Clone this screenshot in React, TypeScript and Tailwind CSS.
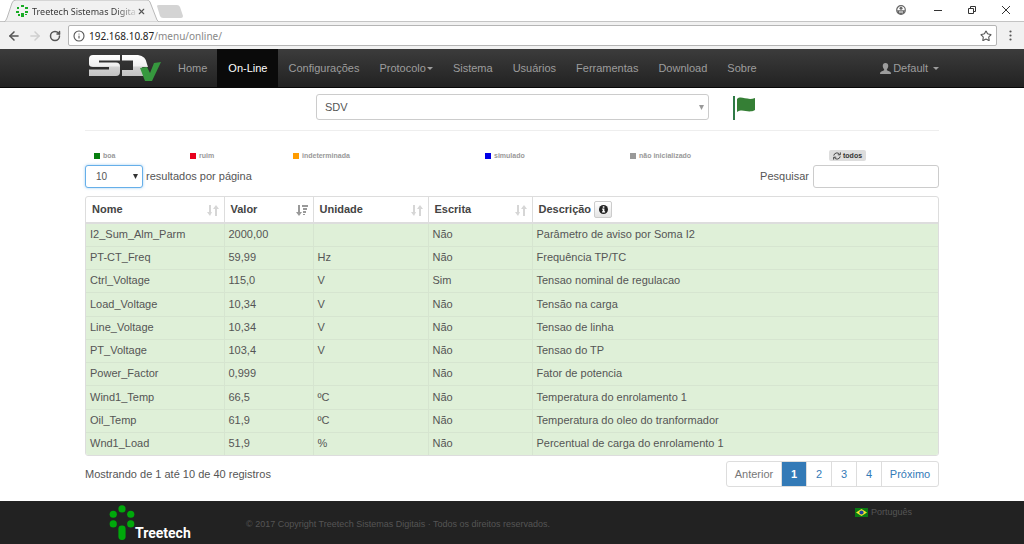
import React, { useState } from 'react';
import { ArrowLeft, ArrowRight, RotateCw, Info, Star, X } from 'lucide-react';

interface Reading {
  name: string;
  value: string;
  unit: string;
  writable: string;
  description: string;
}

const readings: Reading[] = [
  { name: 'I2_Sum_Alm_Parm', value: '2000,00', unit: '', writable: 'Não', description: 'Parâmetro de aviso por Soma I2' },
  { name: 'PT-CT_Freq', value: '59,99', unit: 'Hz', writable: 'Não', description: 'Frequência TP/TC' },
  { name: 'Ctrl_Voltage', value: '115,0', unit: 'V', writable: 'Sim', description: 'Tensao nominal de regulacao' },
  { name: 'Load_Voltage', value: '10,34', unit: 'V', writable: 'Não', description: 'Tensão na carga' },
  { name: 'Line_Voltage', value: '10,34', unit: 'V', writable: 'Não', description: 'Tensao de linha' },
  { name: 'PT_Voltage', value: '103,4', unit: 'V', writable: 'Não', description: 'Tensao do TP' },
  { name: 'Power_Factor', value: '0,999', unit: '', writable: 'Não', description: 'Fator de potencia' },
  { name: 'Wind1_Temp', value: '66,5', unit: 'ºC', writable: 'Não', description: 'Temperatura do enrolamento 1' },
  { name: 'Oil_Temp', value: '61,9', unit: 'ºC', writable: 'Não', description: 'Temperatura do oleo do tranformador' },
  { name: 'Wnd1_Load', value: '51,9', unit: '%', writable: 'Não', description: 'Percentual de carga do enrolamento 1' },
];

const columns = [
  { label: 'Nome', width: 'w-[138px]', sort: 'both' },
  { label: 'Valor', width: 'w-[89px]', sort: 'desc' },
  { label: 'Unidade', width: 'w-[115px]', sort: 'both' },
  { label: 'Escrita', width: 'w-[104px]', sort: 'both' },
];

const navItems = [
  { label: 'Home' },
  { label: 'On-Line', active: true },
  { label: 'Configurações' },
  { label: 'Protocolo', caret: true },
  { label: 'Sistema' },
  { label: 'Usuários' },
  { label: 'Ferramentas' },
  { label: 'Download' },
  { label: 'Sobre' },
];

const legend = [
  { label: 'boa', color: 'bg-[#087f10]', width: 'w-[96px]' },
  { label: 'ruim', color: 'bg-[#e8001c]', width: 'w-[103px]' },
  { label: 'indeterminada', color: 'bg-[#ff9c00]', width: 'w-[192px]' },
  { label: 'simulado', color: 'bg-[#0000e6]', width: 'w-[145px]' },
  { label: 'não inicializado', color: 'bg-[#999999]', width: 'w-[199px]' },
];

const Caret: React.FC<{ className?: string }> = ({ className = '' }) => (
  <svg viewBox="0 0 6 3" className={`h-[3px] w-[6px] ${className}`} fill="currentColor">
    <path d="M0 0h6L3 3z" />
  </svg>
);

const SelectArrow: React.FC<{ className?: string }> = ({ className = '' }) => (
  <svg viewBox="0 0 5 5" className={`pointer-events-none absolute h-[5px] w-[5px] ${className}`} fill="currentColor">
    <path d="M0 0h5L2.5 5z" />
  </svg>
);

const TreeLogo: React.FC<{ className?: string }> = ({ className = '' }) => (
  <svg viewBox="0 0 26 36" className={className} fill="#00a80b">
    <circle cx="13" cy="4" r="3.7" />
    <circle cx="4" cy="9.5" r="3.7" />
    <circle cx="22" cy="9.5" r="3.7" />
    <circle cx="4" cy="19.5" r="3.7" />
    <circle cx="22" cy="19.5" r="3.7" />
    <rect x="9.3" y="21" width="7.4" height="15" rx="3.5" />
  </svg>
);

const SdvLogo: React.FC = () => (
  <svg viewBox="0 0 73 30" className="h-[30px] w-[73px]">
    <defs>
      <linearGradient id="sdv" x1="0" y1="0" x2="0" y2="1">
        <stop offset="0" stopColor="#ffffff" />
        <stop offset="0.5" stopColor="#f0f0f0" />
        <stop offset="0.6" stopColor="#d0d0d0" />
        <stop offset="1" stopColor="#c2c2c2" />
      </linearGradient>
    </defs>
    <path
      fill="url(#sdv)"
      d="M5 2H32V7.500H11V9.500H28Q32 9.500 32 13V19Q32 23 28 23H1V16.500H21V14H5Q1 14 1 11V6Q1 2 5 2ZM34 2H50Q58 3 59 11L60 14H54L58 23H34V17H45V7.500H34Z"
    />
    <path fill="#36983e" d="M52 15L59 14L62 20L66 10L73 9L64 28H57Z" />
  </svg>
);

const SortIcon: React.FC<{ type: string }> = ({ type }) =>
  type === 'desc' ? (
    <svg viewBox="0 0 12 12" className="h-3 w-3 shrink-0 text-[#999]" fill="currentColor">
      <path d="M2 1h2v7h2l-3 4-3-4h2zM6 1h6v2H6zM7 4h4v2H7zM7 7h3v2H7zM7 10h2v1H7z" />
    </svg>
  ) : (
    <svg viewBox="0 0 12 12" className="h-3 w-3 shrink-0 text-[#d6d6d6]" fill="currentColor">
      <path d="M2 1h2v7h1l-2 4-3-4h2zM8 12h2V5h2L9 1 6 5h2z" />
    </svg>
  );

const BrowserChrome: React.FC = () => (
  <div className="bg-[#f1f1f1] text-[#555]">
    <div className="flex h-[22px] items-start justify-between border-b border-[#c4c4c4] bg-white">
      <div className="flex">
        <div className="relative h-[22px] w-[160px]">
          <svg viewBox="0 0 160 22" preserveAspectRatio="none" className="absolute inset-0 h-full w-full">
            <path d="M4 22Q6 21 7 18L12 3Q13 0 16 0H147Q149 0 150 2L157 20L159 22Z" fill="#f1f1f1" stroke="#b9b9b9" />
          </svg>
          <div className="relative flex h-[22px] items-center pl-4">
            <svg viewBox="0 0 12 12" className="h-3 w-3" fill="#18ab24">
              <path d="M5 0h3v2H5zM1 2h2v2H1zM9 2h3v2H9zM0 6h3v2H0zM9 6h3v2H9zM5 8h3v4H5zM2 9h2v2H2zM9 9h2v1H9z" />
            </svg>
            <span className="ml-1 bg-gradient-to-r from-[#333] from-80% to-[#d5d5d5] bg-clip-text font-['Noto_Sans'] text-[9px] whitespace-nowrap text-transparent">
              Treetech Sistemas Digita
            </span>
            <button type="button" aria-label="Fechar aba" className="ml-px">
              <X size={9} strokeWidth={3} />
            </button>
          </div>
        </div>
        <svg viewBox="0 0 28 14" className="mt-[5px] -ml-[4px] h-[14px] w-[28px]">
          <path d="M1 1Q1 0 3 0H21Q23 0 24 2L27 11Q27 13 25 13H7Q5 13 4 11Z" fill="#d4d4d4" />
        </svg>
      </div>
      <div className="flex h-5 items-center gap-[26px] pr-[14px] text-[#333]">
        <svg viewBox="0 0 10 10" className="mr-[2px] h-[10px] w-[10px]">
          <circle cx="5" cy="5" r="4.3" fill="none" stroke="#666" strokeWidth="1.2" />
          <circle cx="5" cy="3.2" r="1.5" fill="#666" />
          <path d="M1 5.2H9L8 8 5 9.2 2 8Z" fill="#666" />
          <path d="M3 6.500h4v1H3z" fill="#fff" />
        </svg>
        <svg viewBox="0 0 8 8" className="h-2 w-2" stroke="currentColor">
          <path d="M0 4.5h8" />
        </svg>
        <svg viewBox="0 0 8 8" className="h-2 w-2" fill="none" stroke="currentColor">
          <path d="M.5 2.5h5v5h-5zM2.5 2V.5h5v5H6" />
        </svg>
        <svg viewBox="0 0 8 8" className="h-2 w-2" stroke="currentColor">
          <path d="M0 0l8 8M8 0L0 8" />
        </svg>
      </div>
    </div>
    <div className="flex h-[27px] items-center pr-[12px] pl-[7px]">
      <button type="button" aria-label="Voltar">
        <ArrowLeft size={14} strokeWidth={2.6} />
      </button>
      <button type="button" aria-label="Avançar" className="ml-[7px] text-[#cfcfcf]">
        <ArrowRight size={14} strokeWidth={2.6} />
      </button>
      <button type="button" aria-label="Recarregar" className="ml-[7px]">
        <RotateCw size={12} strokeWidth={3} />
      </button>
      <div className="ml-[7px] flex h-[21px] flex-1 items-center rounded-[2px] border border-[#b5b5b5] bg-white px-1">
        <Info size={12} strokeWidth={2.2} />
        <span className="ml-1 flex-1 font-['Noto_Sans'] text-[10px] leading-none text-[#888]">
          <span className="text-[#222]">192.168.10.87</span>/menu/online/
        </span>
        <button type="button" aria-label="Favorito">
          <Star size={12} strokeWidth={2.2} />
        </button>
      </div>
      <svg viewBox="0 0 3 11" className="ml-3 h-[11px] w-[3px]" fill="currentColor">
        <circle cx="1.5" cy="1.5" r="1.1" />
        <circle cx="1.5" cy="5.5" r="1.1" />
        <circle cx="1.5" cy="9.5" r="1.1" />
      </svg>
    </div>
  </div>
);

const Navbar: React.FC = () => (
  <nav className="border-b border-[#080808] bg-gradient-to-b from-[#3c3c3c] to-[#222]">
    <div className="mx-auto flex h-[38px] max-w-[854px] text-[#9d9d9d]">
      <a href="#" aria-label="SDV" className="flex items-center pr-[7px] pl-[3px]">
        <SdvLogo />
      </a>
      {navItems.map(item => (
        <a
          key={item.label}
          href="#"
          className={`flex items-center ${item.active ? 'bg-[#0a0a0a] px-[11px] text-white' : 'px-[10px]'}`}
        >
          {item.label}
          {item.caret && <Caret className="ml-px" />}
        </a>
      ))}
      <a href="#" className="ml-auto flex items-center">
        <svg viewBox="0 0 12 12" className="mr-[2px] h-[11px] w-[11px]" fill="currentColor">
          <path d="M6 0C8 0 9 1.3 9 3.2 9 5 8 6 7.5 6.800V8L11 9.500Q12 10 12 12H0Q0 10 1 9.500L4.500 8V6.800C4 6 3 5 3 3.200 3 1.300 4 0 6 0Z" />
        </svg>
        Default
        <Caret className="ml-[5px]" />
      </a>
    </div>
  </nav>
);

const VariableTable: React.FC = () => (
  <div className="mt-2 overflow-hidden rounded-[3px] border border-[#ddd]">
    <table className="w-full table-fixed border-collapse">
      <thead>
        <tr className="h-[26px]">
          {columns.map(col => (
            <th key={col.label} className={`${col.width} border-r border-b-2 border-[#ddd] pr-[5px] pl-[6px]`}>
              <div className="flex items-center justify-between text-[#444]">
                {col.label}
                <SortIcon type={col.sort} />
              </div>
            </th>
          ))}
          <th className="border-b-2 border-[#ddd] px-[6px]">
            <div className="flex items-center gap-[3px] text-[#444]">
              Descrição
              <button
                type="button"
                aria-label="Informações"
                className="flex h-[17px] w-[18px] items-center justify-center rounded-[2px] border border-[#ccc] bg-gradient-to-b from-white to-[#e4e4e4]"
              >
                <svg viewBox="0 0 10 10" className="h-[9px] w-[9px]">
                  <circle cx="5" cy="5" r="5" fill="#222" />
                  <path d="M4.200 1.500h1.800v1.500H4.200zM3.500 4H6v3h.800v1.200H3.400V7h.800V5.200h-.700z" fill="#fff" />
                </svg>
              </button>
            </div>
          </th>
        </tr>
      </thead>
      <tbody className="bg-[#dff0d8]">
        {readings.map(row => (
          <tr key={row.name} className="h-[23px] border-t border-[#d6e5d0] first:border-t-0 nth-[4n]:h-6">
            <td className="border-r border-[#d6e5d0] pl-1">{row.name}</td>
            <td className="border-r border-[#d6e5d0] pl-1">{row.value}</td>
            <td className="border-r border-[#d6e5d0] pl-1">{row.unit}</td>
            <td className="border-r border-[#d6e5d0] pl-1">{row.writable}</td>
            <td className="pl-1">{row.description}</td>
          </tr>
        ))}
      </tbody>
    </table>
  </div>
);

const Pagination: React.FC<{ page: number; onChange: (page: number) => void }> = ({ page, onChange }) => (
  <div className="flex h-[26px] divide-x divide-[#ddd] overflow-hidden rounded-[3px] border border-[#ddd] text-[#337ab7]">
    <button type="button" disabled className="w-[55px] text-[#777]">
      Anterior
    </button>
    {[1, 2, 3, 4].map(n => (
      <button
        key={n}
        type="button"
        onClick={() => onChange(n)}
        className={`w-[25px] ${n === page ? 'bg-[#337ab7] font-bold text-white' : ''}`}
      >
        {n}
      </button>
    ))}
    <button type="button" onClick={() => onChange(Math.min(page + 1, 4))} className="w-[56px]">
      Próximo
    </button>
  </div>
);

const Footer: React.FC = () => (
  <footer className="mt-[14px] bg-[#222] text-[9px] text-[#555]">
    <div className="mx-auto flex h-[43px] max-w-[854px] items-start">
      <div className="flex w-[161px] items-end pt-1 pl-6">
        <TreeLogo className="h-[35px] w-[26px]" />
        <span className="font-['Liberation_Sans_Narrow','Roboto'] text-[14px] leading-[14px] font-bold text-white">Treetech</span>
      </div>
      <p className="pt-4">© 2017 Copyright Treetech Sistemas Digitais · Todos os direitos reservados.</p>
      <a href="#" className="mr-[27px] ml-auto flex items-center gap-[3px] pt-1">
        <svg viewBox="0 0 13 9" className="h-[9px] w-[13px]">
          <path d="M0 0h13v9H0z" fill="#087a12" />
          <path d="M6.500 1L12 4.500 6.500 8 1 4.500Z" fill="#f2e52c" />
          <circle cx="6.500" cy="4.500" r="2.100" fill="#2340a0" />
        </svg>
        Português
      </a>
    </div>
  </footer>
);

const App: React.FC = () => {
  const [page, setPage] = useState<number>(1);
  const [pageSize, setPageSize] = useState<string>('10');
  const [search, setSearch] = useState<string>('');

  return (
    <div className="min-h-screen bg-white font-['Liberation_Sans',Arial,sans-serif] text-[11px] leading-[15px] text-[#555]">
      <BrowserChrome />
      <Navbar />

      <main className="mx-auto max-w-[854px]">
        <div className="flex items-center border-b border-[#eee] pt-[6px] pb-[10px] pl-[231px]">
          <div className="relative w-[393px]">
            <select
              aria-label="Equipamento"
              className="h-[26px] w-full appearance-none rounded-[3px] border border-[#ccc] bg-white px-2 text-[#555]"
            >
              <option>SDV</option>
            </select>
            <SelectArrow className="top-[11px] right-[5px] text-[#999]" />
          </div>
          <svg viewBox="0 0 23 26" className="ml-6 h-[26px] w-[23px]">
            <path d="M0 2h2v24H0z" fill="#2f7a46" />
            <path d="M4 5C8 1 14 7 22 4V16C15 20 10 14 4 18Z" fill="#357f35" />
          </svg>
        </div>

        <div className="mt-[19px] flex h-[11px] items-center pl-[9px] text-[7px] leading-[9px] font-bold text-[#999]">
          {legend.map(item => (
            <div key={item.label} className={`${item.width} flex items-center gap-[3px]`}>
              <span className={`h-[6px] w-[6px] ${item.color}`} />
              {item.label}
            </div>
          ))}
          <button
            type="button"
            className="flex h-[11px] items-center gap-[2px] rounded-[2px] bg-[#ddd] px-1 text-[#333]"
          >
            <svg viewBox="0 0 10 10" className="h-2 w-2" fill="none" stroke="currentColor" strokeWidth="1.1">
              <path d="M1 4.500A4 4 0 0 1 8.200 2.800M9.200 .5V3.500H6M9 5.500A4 4 0 0 1 1.800 7.200M.8 9.500V6.500H4" />
            </svg>
            todos
          </button>
        </div>

        <div className="mt-1 flex items-center justify-between">
          <label className="flex items-center gap-[3px]">
            <span className="relative flex">
              <select
                value={pageSize}
                onChange={e => setPageSize(e.target.value)}
                className="h-[23px] w-[58px] appearance-none rounded-[3px] border border-[#66afe9] bg-white pl-[10px] text-[10px] shadow-[0_0_3px_rgba(102,175,233,0.6)]"
              >
                <option>10</option>
                <option>25</option>
                <option>50</option>
              </select>
              <SelectArrow className="top-[9px] right-[5px] text-[#333]" />
            </span>
            resultados por página
          </label>
          <label className="flex items-center gap-1">
            Pesquisar
            <input
              type="search"
              value={search}
              onChange={e => setSearch(e.target.value)}
              className="h-[23px] w-[126px] rounded-[3px] border border-[#ccc] px-2"
            />
          </label>
        </div>

        <VariableTable />

        <div className="mt-[5px] flex items-center justify-between">
          <p>Mostrando de 1 até 10 de 40 registros</p>
          <Pagination page={page} onChange={setPage} />
        </div>
      </main>

      <Footer />
    </div>
  );
};

export default App;
